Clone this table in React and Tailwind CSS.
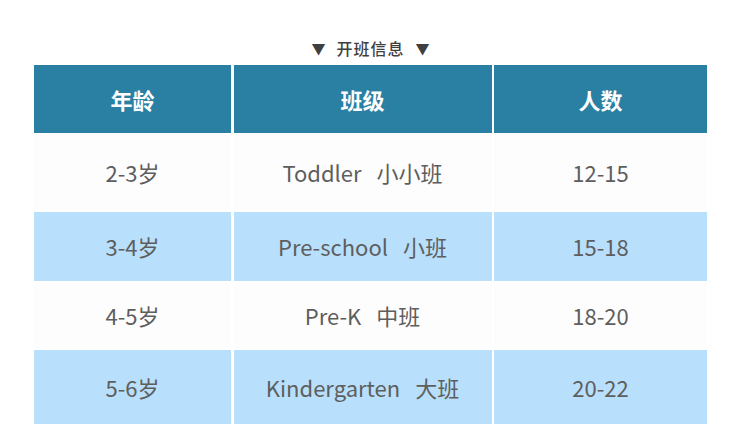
import React from "react";

const ROWS = [
  { age: "2-3岁", name: "Toddler", cls: "小小班", size: "12-15", bg: "bg-[#fdfdfd]", h: "h-[75px]" },
  { age: "3-4岁", name: "Pre-school", cls: "小班", size: "15-18", bg: "bg-[#b8dffb]", h: "h-[69px]" },
  { age: "4-5岁", name: "Pre-K", cls: "中班", size: "18-20", bg: "bg-[#fdfdfd]", h: "h-[65px]" },
  { age: "5-6岁", name: "Kindergarten", cls: "大班", size: "20-22", bg: "bg-[#b8dffb]", h: "h-[74px]" },
];

const HEAD = ["年龄", "班级", "人数"];

function App() {
  return (
    <div className="w-[742px] h-[442px] bg-white font-['Noto_Sans_CJK_SC','Noto_Sans',sans-serif] overflow-hidden">
      {/* TITLE */}
      <div className="pt-[37px] pl-[34px] w-[707px] flex justify-center">
        <p className="flex items-center gap-[11px] text-[16px] leading-[22px] font-medium text-[#3f3f3f]">
          <span className="text-[14px]">▼</span>
          <span className="tracking-[1px]">开班信息</span>
          <span className="text-[14px]">▼</span>
        </p>
      </div>

      {/* TABLE */}
      <div className="ml-[34px] mt-[6px] grid grid-cols-[197px_258px_213px] gap-x-[2.5px] gap-y-[2px] w-[673px]">
        {HEAD.map((h) => (
          <div
            key={h}
            className="h-[68px] bg-[#2a80a2] flex items-center justify-center text-white text-[22px] font-bold"
          >
            {h}
          </div>
        ))}

        {ROWS.map((r) => (
          <React.Fragment key={r.age}>
            <div className={`${r.bg} ${r.h} flex items-center justify-center text-[22px] text-[#5e5e5e]`}>
              {r.age}
            </div>
            <div className={`${r.bg} ${r.h} flex items-center justify-center text-[22px] text-[#5e5e5e]`}>
              <span>{r.name}</span>
              <span className="ml-[15px]">{r.cls}</span>
            </div>
            <div className={`${r.bg} ${r.h} flex items-center justify-center text-[22px] text-[#5e5e5e]`}>
              {r.size}
            </div>
          </React.Fragment>
        ))}
      </div>
    </div>
  );
}

export default App;
